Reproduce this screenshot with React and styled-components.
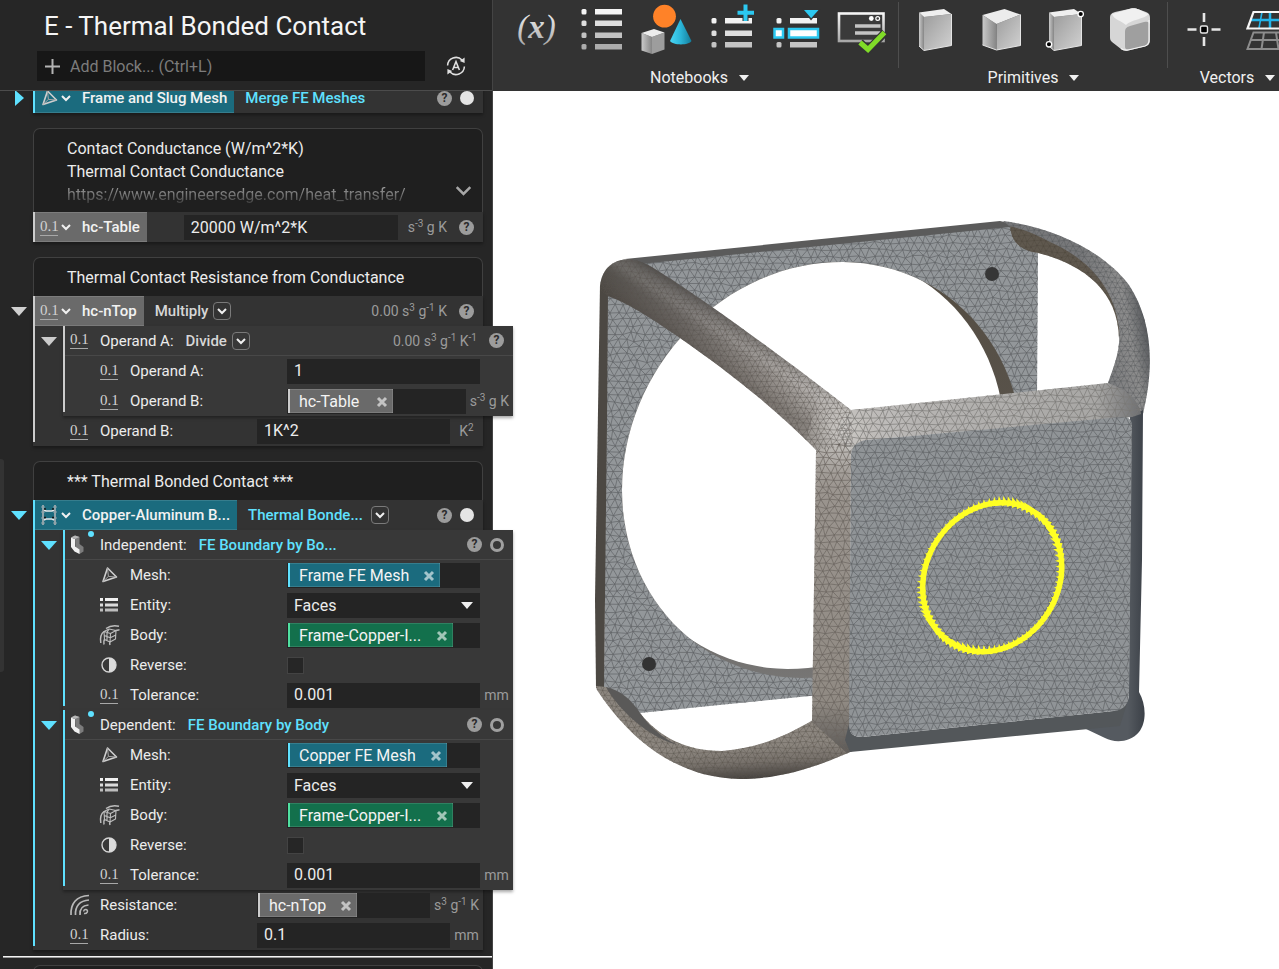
import React, { useId } from "react";
import styled, { createGlobalStyle, css } from "styled-components";

const GlobalStyle = createGlobalStyle`
  *, *::before, *::after { box-sizing: border-box; }
  body {
    margin: 0;
    background: #fff;
    color: #ececec;
    font-family: Roboto, "Liberation Sans", sans-serif;
    font-size: 15px;
    line-height: 20px;
  }
  button, input, select { font: inherit; color: inherit; margin: 0; }
  button { background: none; border: 0; padding: 0; cursor: pointer; }
  svg { display: block; flex: none; }
`;

const tones = {
  cyan: { bar: "#5fe1ff", fill: "#1b6b7e", text: "#5fe1ff" },
  gray: { bar: "#cccccc", fill: "#6a6a6a", text: "#d6d6d6" },
  green: { bar: "#4fe0a0", fill: "#13704c", text: "#4fe0a0" },
};

/* ---------- page frame ---------- */

const Shell = styled.div`
  display: flex;
  height: 100vh;
  overflow: hidden;
`;

const Sidebar = styled.aside`
  position: relative;
  z-index: 1;
  flex: none;
  width: 493px;
  background: #262626;
  border-right: 1px solid #444;
`;

const SidebarHead = styled.header`
  position: relative;
  z-index: 1;
  height: 91px;
  padding: 10px 24px 0 37px;
  background: #262626;
  border-bottom: 1px solid #4c4c4c;
`;

const Title = styled.h1`
  margin: 0 0 9px 7px;
  font-size: 26px;
  font-weight: 400;
  line-height: 32px;
  color: #f5f5f5;
`;

const SearchRow = styled.div`
  display: flex;
  align-items: center;
  justify-content: space-between;
`;

const SearchBox = styled.label`
  display: flex;
  align-items: center;
  gap: 9px;
  width: 388px;
  height: 30px;
  padding: 1px 7px 0;
  background: #171717;
`;

const SearchInput = styled.input`
  flex: 1;
  min-width: 0;
  padding: 0;
  border: 0;
  outline: 0;
  background: none;
  font-size: 16px;
  &::placeholder { color: #7c7c7c; opacity: 1; }
`;

const AutoButton = styled.button`
  margin-right: 2px;
`;

const Main = styled.main`
  flex: 1;
  min-width: 0;
  display: flex;
  flex-direction: column;
`;

const ToolbarStrip = styled.nav`
  display: flex;
  flex: none;
  height: 91px;
  padding: 2px 0 0 7px;
  overflow: hidden;
  background: #333;
`;

const ToolGroup = styled.section`
  flex: none;
`;

const ToolIcons = styled.div`
  display: flex;
  height: 66px;
  padding: 0 4px;
  border-right: 1px solid #4e4e4e;
`;

const ToolButton = styled.button`
  width: 65px;
  height: 60px;
`;

const ToolLabel = styled.button`
  display: flex;
  align-items: center;
  justify-content: center;
  gap: 11px;
  width: 100%;
  height: 20px;
  font-size: 16px;
  color: #f0f0f0;
`;

const Viewport = styled.div`
  flex: 1;
  min-height: 0;
  background: #fff;
  svg { width: 100%; height: 100%; }
`;

/* ---------- notebook ---------- */

const Notebook = styled.div`
  display: flex;
  flex-direction: column;
  gap: 15px;
  margin-top: -8px;
  padding-right: 9px;
`;

const Gutter = styled.button`
  display: flex;
  align-items: center;
  justify-content: center;
  flex: none;
  width: ${(p) => (p.$nested ? 28 : 33)}px;
  height: 30px;
  padding-left: ${(p) => (p.$nested ? 0 : 5)}px;
`;

const Comment = styled.div`
  position: relative;
  margin-left: 33px;
  padding: 8px 33px 7px;
  height: ${(p) => (p.$tall ? 84 : 39)}px;
  border: 1px solid #404040;
  border-bottom: 0;
  border-radius: 7px 7px 0 0;
  background: #1f1f1f;
  font-size: 16px;
  line-height: 23px;
  overflow: hidden;
`;

const CommentLine = styled.div`
  white-space: nowrap;
  ${(p) =>
    p.$faded &&
    css`
      color: transparent;
      background: linear-gradient(#b4b4b4, #333);
      background-clip: text;
    `}
`;

const CommentMore = styled.button`
  position: absolute;
  right: 10px;
  bottom: 13px;
`;

const BlockRow = styled.div`
  display: flex;
  align-items: flex-start;
`;

const Body = styled.div`
  flex: none;
  width: 450px;
  padding-left: 2px;
  background:
    linear-gradient(${(p) => tones[p.$tone].bar}, ${(p) => tones[p.$tone].bar}) 0 0 / 2px
      ${(p) => (p.$short ? "calc(100% - 4px)" : "100%")} no-repeat,
    ${(p) => (p.$nested ? "#383838" : "#333333")};
  box-shadow: 0 2px 3px rgba(0, 0, 0, 0.35);
`;

const Head = styled.div`
  display: flex;
  align-items: center;
  height: 30px;
  padding-right: 9px;
  ${(p) =>
    p.$nested &&
    css`
      padding-left: 5px;
      border-bottom: 1px solid #484848;
    `}
`;

const NameTag = styled.button`
  display: flex;
  align-items: center;
  height: 30px;
  margin-right: 11px;
  padding: 0 7px 0 5px;
  background: ${(p) => tones[p.$tone].fill};
  box-shadow: inset 0 1px rgba(255, 255, 255, 0.12), inset 0 -1px rgba(255, 255, 255, 0.12);
  font-weight: 500;
  color: #f2f2f2;
  white-space: nowrap;
`;

const NameText = styled.span`
  margin-left: 11px;
`;

const ChevronSlot = styled.span`
  margin-left: 3px;
`;

const Func = styled.span`
  min-width: ${(p) => p.$min || 0}px;
  font-weight: 500;
  color: ${(p) => tones[p.$tone].text};
  white-space: nowrap;
`;

const HeadLabel = styled.span`
  margin: 0 12px;
`;

const DropButton = styled.button`
  display: grid;
  place-items: center;
  width: 18px;
  height: 18px;
  margin-left: 5px;
  border: 1px solid #7a7a7a;
  border-radius: 4px;
`;

const HeadEnd = styled.div`
  display: flex;
  align-items: center;
  gap: 8px;
  margin-left: auto;
`;

const Help = styled.button`
  display: grid;
  place-items: center;
  width: 15px;
  height: 15px;
  border-radius: 50%;
  background: #9c9c9c;
  color: #2c2c2c;
  font-size: 12px;
  font-weight: 700;
  line-height: 15px;
`;

const Dot = styled.button`
  width: 14px;
  height: 14px;
  border-radius: 50%;
  ${(p) => (p.$hollow ? "border: 3px solid #a0a0a0;" : "background: #e4e4e4;")}
`;

const Param = styled.div`
  display: flex;
  align-items: center;
  height: 30px;
  padding-left: 35px;
`;

const ParamLabel = styled.label`
  width: 169px;
  padding-left: 12px;
`;

const Field = styled.div`
  display: flex;
  align-items: center;
  flex: 1;
  min-width: 0;
  height: 25px;
  padding-left: ${(p) => (p.$chip ? 1 : 7)}px;
  background: #242424;
  font-size: 16px;
`;

const TextInput = styled.input`
  width: 100%;
  min-width: 0;
  padding: 0;
  border: 0;
  outline: 0;
  background: none;
`;

const Select = styled.select`
  flex: 1;
  min-width: 0;
  padding: 1px 0 0;
  border: 0;
  outline: 0;
  background: none;
  appearance: none;
`;

const SelectArrow = styled.span`
  margin-right: 7px;
  pointer-events: none;
`;

const CheckCell = styled.div`
  display: flex;
  align-items: center;
  flex: 1;
`;

const Check = styled.input`
  appearance: none;
  width: 17px;
  height: 17px;
  margin: 0;
  border: 1px solid #434343;
  background: #262626;
`;

const Chip = styled.span`
  display: flex;
  align-items: center;
  justify-content: space-between;
  width: ${(p) => p.$width}px;
  height: 24px;
  padding: 1px 5px 0 9px;
  border-left: 2px solid ${(p) => tones[p.$tone].bar};
  background: ${(p) => tones[p.$tone].fill};
  box-shadow: inset -1px 0 rgba(255, 255, 255, 0.12), inset 0 1px rgba(255, 255, 255, 0.12),
    inset 0 -1px rgba(255, 255, 255, 0.12);
  color: #f4f4f4;
  white-space: nowrap;
`;

const UnitText = styled.span`
  font-size: 14px;
  color: #9b9b9b;
  white-space: nowrap;
  text-align: center;
  ${(p) => p.$cell && "min-width: 33px; padding: 0 4px;"}
  ${(p) => p.$head && "margin-right: 4px;"}
  sup {
    font-size: 10px;
    line-height: 0;
    vertical-align: 5px;
  }
`;

const TableField = styled(Field)`
  flex: none;
  width: 214px;
  margin-left: 26px;
  padding-top: 1px;
`;

const Scalar = styled.span`
  width: 18px;
  height: 17px;
  border-bottom: 1px solid #a8a8a8;
  font-family: "Liberation Serif", serif;
  font-size: 15px;
  font-weight: 400;
  line-height: 15px;
  text-align: center;
  color: #d2d2d2;
`;

const BoundaryMark = styled.span`
  position: relative;
  &::after {
    content: "";
    position: absolute;
    top: -4px;
    left: 18px;
    width: 6px;
    height: 6px;
    border-radius: 50%;
    background: #5fe1ff;
  }
`;

const IconCell = styled.span`
  display: flex;
  align-items: center;
  width: 18px;
  svg { overflow: visible; }
`;

const InsertLine = styled.div`
  height: 2px;
  margin: -9px -9px -8px 3px;
  border-top: 1px solid #f4f4f4;
  border-bottom: 1px solid #9a9a9a;
`;

const SideHandle = styled.div`
  position: absolute;
  left: 0;
  top: 459px;
  width: 4px;
  height: 213px;
  border-radius: 0 3px 3px 0;
  background: #333;
`;

/* ---------- small icons ---------- */

const Chevron = ({ w = 10, sw = 2, color = "#f0f0f0" }) => (
  <svg width={w} height={w} viewBox="0 0 10 10" fill="none" stroke={color} strokeWidth={sw}>
    <path d="M1 3 L5 7 L9 3" />
  </svg>
);

const Triangle = ({ w = 10, color = "#f0f0f0" }) => (
  <svg width={w} height={w / 2 + 1} viewBox="0 0 16 9" preserveAspectRatio="none">
    <path d="M0 0 H16 L8 9 Z" fill={color} />
  </svg>
);

const TriangleRight = ({ color }) => (
  <svg width="9" height="16" viewBox="0 0 9 16">
    <path d="M0 0 V16 L9 8 Z" fill={color} />
  </svg>
);

const Cross = () => (
  <svg width="12" height="12" viewBox="0 0 12 12" stroke="#fff" strokeOpacity="0.6" strokeWidth="3">
    <path d="M2 2 L10 10 M10 2 L2 10" />
  </svg>
);

const PlusIcon = () => (
  <svg width="17" height="17" viewBox="0 0 17 17" stroke="#b4b4b4" strokeWidth="2">
    <path d="M8.500 1 V16 M1 8.500 H16" />
  </svg>
);

const AutoIcon = () => (
  <svg width="20" height="20" viewBox="0 0 20 20" fill="none" stroke="#e0e0e0" strokeWidth="1.500">
    <path d="M1.600 9.500 A8.400 8.400 0 0 1 16 4 M18.400 10.500 A8.400 8.400 0 0 1 4 16" />
    <path d="M18.600 1.500 V7 L13.800 5 Z M1.400 18.500 V13 L6.200 15 Z" fill="#e0e0e0" stroke="none" />
    <path d="M6.600 14 L10 5.600 L13.400 14 M7.800 11.400 H12.200" />
  </svg>
);

const MeshIcon = () => (
  <svg width="18" height="18" viewBox="0 0 18 18" fill="none" strokeLinejoin="round">
    <path d="M7.500 2 L16.500 11 L3 15.500 Z" stroke="#cfcfcf" strokeWidth="1.600" />
    <path d="M7.500 2 L8.400 10.400 L3 15.500 M8.400 10.400 L16 11" stroke="#a8a8a8" strokeWidth="1" />
  </svg>
);

const ListIcon = () => (
  <svg width="18" height="18" viewBox="0 0 18 18">
    <path d="M0 2 H3 V5 H0 Z M5 2 H18 V5 H5 Z" fill="#f0f0f0" />
    <path d="M0 7.500 H3 V10.500 H0 Z M5 7.500 H18 V10.500 H5 Z" fill="#dcdcdc" />
    <path d="M0 12.500 H3 V15.500 H0 Z M5 12.500 H18 V15.500 H5 Z" fill="#bdbdbd" />
  </svg>
);

const BodyIcon = () => (
  <svg width="20" height="20" viewBox="0 0 20 20" fill="none" stroke="#bdbdbd" strokeWidth="1.100" strokeLinejoin="round">
    <path d="M4 6.500 L9 4 L16 5.500 L15.500 14 L10 17 L4.500 14.500 Z M4 6.500 L10.500 8.500 L16 5.500 M10.500 8.500 L10 17 M4.200 10.500 L10.300 12.800 L15.800 10 M9 4 L7 7.500 L7 15.500" />
    <path d="M6 3.500 C10 .5 15 .3 19 1.200 M.8 18 C0 13 .5 9 4 6.500 M16 5.500 C17.500 4.700 18 4.700 19.500 5 M4.500 14.500 C3.500 16 3.500 17 4 19.500 M10 17 C9.500 18 9.500 18.500 10 20" strokeWidth="1.500" />
  </svg>
);

const HalfIcon = () => (
  <svg width="18" height="18" viewBox="0 0 18 18">
    <circle cx="9" cy="9" r="7" fill="none" stroke="#d4d4d4" strokeWidth="1.400" />
    <path d="M9 2 A7 7 0 0 1 9 16 Z" fill="#dcdcdc" />
  </svg>
);

const BoundaryIcon = () => (
  <svg width="18" height="20" viewBox="0 0 18 20">
    <path d="M1 2.500 L5 .5 L9.500 2 V9 L13.500 12 V16.500 L9.500 19 L5.500 15 L5 3 Z" fill="#7c7c7c" />
    <path d="M1 2.500 L5 4 V11.500 L9.500 14.500 V19 L4.500 16.500 L1 12 Z" fill="#f2f2f2" />
    <path d="M1 2.500 L5 .5 L9.500 2 L5 4 Z" fill="#b8b8b8" />
  </svg>
);

const BondIcon = () => (
  <svg width="18" height="20" viewBox="0 0 18 20" fill="none">
    <path d="M3 0 V20 M15 0 V20" stroke="#8fa3a9" strokeWidth="2" />
    <path d="M1 2 H5 M1 7 H5 M1 13 H5 M1 18 H5 M13 2 H17 M13 7 H17 M13 13 H17 M13 18 H17" stroke="#8fa3a9" strokeWidth="1" />
    <path d="M4 5 L6 6 H12 L14 5 M4 15 L6 14 H12 L14 15" stroke="#e4e8e9" strokeWidth="1.500" />
    <path d="M4 4 H6 M12 4 H14 M4 12.500 H6 M12 12.500 H14" stroke="#141414" strokeWidth="1.600" />
  </svg>
);

const ResistIcon = () => (
  <svg width="20" height="22" viewBox="0 0 20 22" fill="none" stroke="#b9b9b9" strokeWidth="1.700">
    <path d="M1 21 C.5 10 6 2 19 1.500" />
    <path d="M5.500 21 C5 12.500 9.500 6.500 19 6" />
    <path d="M10 21 C9.500 15 12.500 11.500 18.500 11" />
    <path d="M14 19.500 C17 20 19 16.500 16 15.500 C14.500 15.300 13.500 16.500 14 17.500" strokeWidth="1.500" />
  </svg>
);

const ScalarIcon = () => <Scalar>0.1</Scalar>;

/* ---------- toolbar icons ---------- */

const Tool = ({ label, children }) => (
  <ToolButton aria-label={label}>
    <svg width="65" height="60" viewBox="0 2 65 60">
      <defs>
        <linearGradient id="steel" x1="0" y1="0" x2="1" y2="1">
          <stop offset="0" stopColor="#9c9c9c" />
          <stop offset="1" stopColor="#d2d2d2" />
        </linearGradient>
        <linearGradient id="steelDark" x1="0" y1="0" x2="1" y2="0">
          <stop offset="0" stopColor="#c9c9c9" />
          <stop offset="1" stopColor="#858585" />
        </linearGradient>
        <linearGradient id="fadeDown" x1="0" y1="0" x2="0" y2="1">
          <stop offset="0" stopColor="#f5f5f5" />
          <stop offset="1" stopColor="#a8a8a8" />
        </linearGradient>
        <linearGradient id="coneFill" x1="0" y1="0" x2="1" y2="0">
          <stop offset="0" stopColor="#49d6f5" />
          <stop offset=".5" stopColor="#2bb5d8" />
          <stop offset="1" stopColor="#137b99" />
        </linearGradient>
      </defs>
      {children}
    </svg>
  </ToolButton>
);

const ListBars = ({ rows }) =>
  rows.map(([y, c]) => (
    <g key={y} fill={c}>
      <rect x="12.500" y={y} width="5" height="5.500" rx="1.500" />
      <rect x="26" y={y} width="27" height="5.500" />
    </g>
  ));

const threeRows = [[18, "#f2f2f2"], [30.5, "#dedede"], [42, "#c4c4c4"]];

const SlabShape = () => (
  <g strokeLinejoin="round">
    <path d="M16 12.500 L21 17 V50.500 L16 46 Z" fill="url(#steelDark)" />
    <path d="M21 17 L48.500 14 V45.500 L21 50.500 Z" fill="url(#steel)" />
    <path d="M16 12.500 L41 9 L48.500 14 L21 17 Z" fill="#efefef" />
    <path d="M16 46 L21 50.500 L48.500 45.500 V14" fill="none" stroke="#e4e4e4" strokeWidth="1" />
  </g>
);

const notebookTools = [
  ["Variable", <text key="v" x="32.500" y="38" textAnchor="middle" fontFamily="Liberation Serif, serif" fontStyle="italic" fontWeight="400" fontSize="33" fill="url(#fadeDown)">(<tspan fontWeight="700">x</tspan>)</text>],
  ["List", <ListBars key="l" rows={[[9, "#f5f5f5"], [20.5, "#dedede"], [32.5, "#c2c2c2"], [44, "#acacac"]]} />],
  ["Objects", <g key="o">
    <circle cx="30.500" cy="16.200" r="11.400" fill="#ff8228" />
    <path d="M7.500 33 L18 37 V54 L7.500 50.500 Z" fill="url(#steelDark)" />
    <path d="M18 37 L30.500 32.500 V49.500 L18 54 Z" fill="#9d9d9d" />
    <path d="M7.500 33 L20 29 L30.500 32.500 L18 37 Z" fill="#ececec" />
    <path d="M46.500 19 L57.500 41 C55 45.500 39 45.500 36 41 Z" fill="url(#coneFill)" />
  </g>],
  ["Add to list", <g key="a">
    <ListBars rows={threeRows} />
    <path d="M46.500 4.500 V21 M38.500 12.700 H55" stroke="#333" strokeWidth="6" />
    <path d="M46.500 4.500 V21 M38.500 12.700 H55" stroke="#2cc8f0" strokeWidth="4" />
  </g>],
  ["Select in list", <g key="s">
    <ListBars rows={threeRows} />
    <path d="M38 9 H56.500 L47 20.500 Z" fill="#333" />
    <path d="M40 10 H54.500 L47.200 18.300 Z" fill="#2cc8f0" />
    <rect x="10.500" y="29" width="8.500" height="8.500" fill="#fff" stroke="#2cc8f0" strokeWidth="2.500" />
    <rect x="25" y="29" width="29" height="8.500" fill="#fff" stroke="#2cc8f0" strokeWidth="2.500" />
  </g>],
  ["Report", <g key="r">
    <rect x="10" y="13.500" width="44.500" height="27.500" fill="#3a3a3a" stroke="url(#fadeDown)" strokeWidth="2.600" />
    <circle cx="42.300" cy="18.500" r="2.400" fill="#fff" />
    <circle cx="48.700" cy="18.500" r="1.900" fill="none" stroke="#fff" strokeWidth="1.200" />
    <path d="M26 26 H51.500 M26 33 H51.500" stroke="#c4c4c4" strokeWidth="3.500" />
    <path d="M31 42.500 L39 50 L56 32.500" stroke="#333" strokeWidth="8" fill="none" />
    <path d="M31 42.500 L39 49.500 L55.500 32.500" stroke="#80dc28" strokeWidth="5" fill="none" />
  </g>],
];

const primitiveTools = [
  ["Box", <SlabShape key="b" />],
  ["Cube", <g key="c">
    <path d="M14.500 15 L28.500 24 V50 L14.500 45 Z" fill="url(#steelDark)" />
    <path d="M28.500 24 L52.500 14.500 V45.500 L28.500 50 Z" fill="url(#steel)" />
    <path d="M14.500 15 L36.500 9 L52.500 14.500 L28.500 24 Z" fill="#ececec" />
    <path d="M14.500 45 L28.500 50 L52.500 45.500 V14.500" fill="none" stroke="#e4e4e4" strokeWidth="1" />
  </g>],
  ["Box from corners", <g key="p">
    <SlabShape />
    <circle cx="47.700" cy="14" r="2.700" fill="#000" stroke="#fff" strokeWidth="1.300" />
    <circle cx="16" cy="44.300" r="2.700" fill="#000" stroke="#fff" strokeWidth="1.300" />
  </g>],
  ["Rounded box", <g key="r">
    <path d="M12 18 C12 14 14 13 17 12 L33 8.500 C36 8 38 8.500 41 9.500 L48 12 C51 13 52 15 52 18 V40 C52 44 50 45.500 47 46.500 L30 50.500 C27 51 25 50.500 23 49 L14 42 C12 40 12 39 12 36 Z" fill="#d6d6d6" />
    <path d="M27 32 C27 28 29 27 32 26 L46 22 C50 21 51.500 22 51.500 25 V40 C51.500 43 50 45 47 46 L32 49.500 C28 50 27 49 27 46 Z" fill="#9f9f9f" />
    <path d="M14 14 L33 8.500 C36 8 38 8.500 41 9.500 L50 14 C48 19 34 19 28 25 C24 21 16 20 14 14 Z" fill="#f0f0f0" />
    <path d="M51 20 V40 C51 43 50 45 47 46 L30 50 C27 50.500 25 50 23 48.500" fill="none" stroke="#f4f4f4" strokeWidth="1.200" />
  </g>],
];

const vectorTools = [
  ["Point", <g key="pt" stroke="#e6e6e6">
    <path d="M32 13 V22 M32 37 V46 M15.500 29.500 H24.500 M39.500 29.500 H48.500" strokeWidth="2.600" />
    <rect x="28.500" y="26" width="7" height="7" rx="1.500" fill="#000" strokeWidth="1.400" />
  </g>],
  ["Plane", <g key="pl" fill="none">
    <path d="M16.500 32.500 H49.500 L55.500 49 H10.500 Z M13.500 40 H53 M27 32.500 L24.500 49 M39 32.500 L41.500 49" stroke="#8c8c8c" strokeWidth="2" />
    <path d="M13.500 20 H53 M33 12 V28" stroke="#22b4ea" strokeWidth="2.500" />
    <path d="M25 12 L22 28" stroke="#22b4ea" strokeWidth="1.500" />
    <path d="M16.500 12 H49.500 L55.500 28.500 H10.500 Z" stroke="#f6f6f6" strokeWidth="2.200" />
  </g>],
];

function ToolSection({ title, tools }) {
  return (
    <ToolGroup>
      <ToolIcons>
        {tools.map(([label, art]) => (
          <Tool key={label} label={label}>{art}</Tool>
        ))}
      </ToolIcons>
      <ToolLabel>
        {title}
        <Triangle />
      </ToolLabel>
    </ToolGroup>
  );
}

/* ---------- notebook parts ---------- */

function Units({ value, parts, cell, head }) {
  return (
    <UnitText $cell={cell} $head={head}>
      {value && `${value} `}
      {parts.map(([base, power], i) => (
        <React.Fragment key={base}>
          {i > 0 && " "}
          {base}
          {power && <sup>{power}</sup>}
        </React.Fragment>
      ))}
    </UnitText>
  );
}

function Tag({ tone, icon, children }) {
  return (
    <NameTag $tone={tone}>
      {icon}
      <ChevronSlot><Chevron /></ChevronSlot>
      <NameText>{children}</NameText>
    </NameTag>
  );
}

const Drop = () => (
  <DropButton aria-label="Change overload"><Chevron /></DropButton>
);

function ParamRow({ icon, label, text, chip, select, check, units }) {
  const id = useId();
  return (
    <Param>
      <IconCell>{icon}</IconCell>
      <ParamLabel htmlFor={chip ? undefined : id} as={chip ? "span" : "label"}>{label}:</ParamLabel>
      {check ? (
        <CheckCell><Check id={id} type="checkbox" /></CheckCell>
      ) : (
        <Field $chip={!!chip}>
          {text && <TextInput id={id} defaultValue={text} />}
          {select && (
            <>
              <Select id={id} defaultValue={select}>
                <option>{select}</option>
              </Select>
              <SelectArrow><Triangle w={12} /></SelectArrow>
            </>
          )}
          {chip && (
            <Chip $tone={chip.tone} $width={chip.width}>
              {chip.name}
              <button aria-label={`Remove ${chip.name}`}><Cross /></button>
            </Chip>
          )}
        </Field>
      )}
      {units ? <Units cell parts={units} /> : <UnitText $cell />}
    </Param>
  );
}

function Nested({ tone, head, children }) {
  return (
    <BlockRow>
      <Gutter $nested aria-label="Collapse"><Triangle w={16} color={tones[tone].bar} /></Gutter>
      <Body $nested $tone={tone} $short>
        <Head $nested>{head}</Head>
        {children}
      </Body>
    </BlockRow>
  );
}

function BoundaryBlock({ label, func, meshName, meshWidth }) {
  return (
    <Nested
      tone="cyan"
      head={
        <>
          <BoundaryMark><BoundaryIcon /></BoundaryMark>
          <HeadLabel>{label}:</HeadLabel>
          <Func $tone="cyan">{func}</Func>
          <HeadEnd>
            <Help aria-label="Help">?</Help>
            <Dot $hollow aria-label="Toggle visibility" />
          </HeadEnd>
        </>
      }
    >
      <ParamRow icon={<MeshIcon />} label="Mesh" chip={{ tone: "cyan", name: meshName, width: meshWidth }} />
      <ParamRow icon={<ListIcon />} label="Entity" select="Faces" />
      <ParamRow icon={<BodyIcon />} label="Body" chip={{ tone: "green", name: "Frame-Copper-I...", width: 165 }} />
      <ParamRow icon={<HalfIcon />} label="Reverse" check />
      <ParamRow icon={<ScalarIcon />} label="Tolerance" text="0.001" units={[["mm"]]} />
    </Nested>
  );
}

/* ---------- 3D model ---------- */

function meshPath(x0, y0, w, h, step, seed) {
  let s = seed;
  const rand = () => {
    s = (s * 16807) % 2147483647;
    return s / 2147483647 - 0.5;
  };
  const rowH = step * 0.87;
  const cols = Math.ceil(w / step) + 2;
  const rows = Math.ceil(h / rowH) + 2;
  const pts = [];
  for (let r = 0; r < rows; r++) {
    const line = [];
    for (let c = 0; c < cols; c++) {
      line.push([
        (x0 + (c + (r % 2) / 2 - 0.5) * step + rand() * step * 0.38).toFixed(1),
        (y0 + r * rowH + rand() * step * 0.38).toFixed(1),
      ]);
    }
    pts.push(line);
  }
  let d = "";
  for (let r = 0; r < rows; r++) {
    d += "M" + pts[r].map((p) => p.join(" ")).join("L");
    if (r + 1 < rows) {
      for (let c = 0; c + 1 < cols; c++) {
        const a = pts[r][c];
        const b = r % 2 ? pts[r + 1][c + 1] : pts[r + 1][c];
        const e = pts[r + 1][c];
        d += `M${b.join(" ")}L${a.join(" ")}`;
        if (r % 2) d += `L${e.join(" ")}`;
        else d += `M${pts[r][c + 1].join(" ")}L${b.join(" ")}`;
      }
    }
  }
  return d;
}

function ringPoint(cx, cy, a, b, phi, t) {
  return [cx + a * Math.cos(t), cy + b * Math.sin(t + phi)];
}

function ellipsePath(cx, cy, a, b, phi) {
  const n = 120;
  let d = "M";
  for (let i = 0; i < n; i++) {
    const [x, y] = ringPoint(cx, cy, a, b, phi, (i / n) * Math.PI * 2);
    d += `${i ? "L" : ""}${x.toFixed(1)} ${y.toFixed(1)}`;
  }
  return d + "Z";
}

// Cones standing on the ring: upright at top and bottom, leaning left at the sides.
function teethPath() {
  const n = 86;
  const half = 3;
  const f = (v) => v.toFixed(1);
  let d = "";
  for (let i = 0; i < n; i++) {
    const t = (i / n) * Math.PI * 2;
    const [x, y] = ringPoint(992, 577, 69.5, 74.5, -0.14, t);
    const c = Math.cos(t);
    const s = Math.sin(t);
    const ux = -Math.abs(c);
    const uy = -Math.abs(s);
    const len = 6 - 4 * c * s;
    const wide = half - 2.4 * Math.min(0, c * s);
    const bx = x - ux * 3;
    const by = y - uy * 3;
    d += `M${f(bx - uy * wide)} ${f(by + ux * wide)}L${f(x + ux * len)} ${f(y + uy * len)}L${f(bx + uy * wide)} ${f(by - ux * wide)}Z`;
  }
  return d;
}

const coarse = meshPath(590, 215, 560, 570, 8, 17);
const fine = meshPath(590, 215, 565, 570, 6, 91);
const shape = {
  plate: "M607 296 L640 262 L1010 225 L1018 245 L1038 253 L1037 395 L860 420 L830 450 L830 694 L640 713 L604 688 Z",
  topEdge: "M625 259 L1000 221 L1013 224 L1010 227 L640 264 Z",
  leftEdge: "M600 285 L608 292 L607 420 L604 688 L596 688 L595 600 Z",
  tube: "M600 290 C600 270 612 259 630 259 C637 260 642 262 650 266 C694 292 790 362 851 410 L853 446 L816 450 C770 402 700 350 650 318 C636 309 622 301 608 296 Z",
  corner: "M806 438 L822 388 L851 410 L890 406 L880 438 C858 441 851 448 851 480 L816 480 L816 450 Z",
  topStrip: "M851 410 L1108 383 C1125 389 1138 398 1141 414 L1132 417 L868 440 C856 442 851 448 851 457 L838 430 Z",
  leftStrip: "M816 450 L851 440 L850 738 L857 749 L847 753 L812 722 Z",
  face: "M851 457 C851 447 857 441 867 440 L1122 417 C1130 417 1132 420 1132 427 L1129 692 C1129 704 1124 710 1114 711 L862 737 C853 737 849 733 849 724 Z",
  rightEdge: "M1130 417 L1143 410 L1142 560 L1139 692 C1146 704 1147 722 1139 732 C1130 743 1114 743 1105 738 L1086 729 L1110 712 C1124 710 1129 704 1129 692 Z",
  bottomEdge: "M849 724 C849 733 853 737 862 737 L1114 711 L1128 700 L1120 726 L850 752 L845 740 Z",
  armInner: "M1010 225 C1011 240 1018 250 1038 253 C1082 264 1118 290 1119 338 L1122 330 C1122 290 1090 245 1040 232 Z",
  armOuter: "M1003 221 C1058 228 1106 254 1129 285 C1150 317 1156 360 1143 414 L1136 425 L1108 383 C1114 366 1121 350 1119 328 C1114 284 1084 257 1050 242 C1036 234 1022 229 1009 226 Z",
  lowArm: "M596 686 L606 687 C618 692 632 702 640 713 C659 737 686 751 722 751 C756 749 786 736 813 720 L850 735 L857 749 C815 768 780 779 740 779 C668 778 622 728 597 690 Z",
  lowArmInner: "M606 687 C620 690 632 700 640 713 C649 726 662 738 678 745 C650 738 620 712 606 687 Z",
};

function Model() {
  const hole = ellipsePath(822, 470, 200, 208, -0.096);
  const back = ellipsePath(808, 461, 197, 208, -0.096);
  const ring = ellipsePath(992, 577, 69.5, 74.5, -0.14);
  const lines = (id, d, stroke, opacity) => (
    <path d={d} clipPath={`url(#c-${id})`} fill="none" stroke={stroke} strokeWidth="0.800" strokeOpacity={opacity} />
  );
  return (
    <svg viewBox="493 91 786 878" role="img" aria-label="Meshed frame with bonded contact ring">
      <defs>
        {["plate", "tube", "topStrip", "leftStrip", "face", "armOuter", "lowArm", "armInner"].map((k) => (
          <clipPath id={`c-${k}`} key={k}><path d={shape[k]} /></clipPath>
        ))}
        <clipPath id="c-hole"><path d={hole} /></clipPath>
        <clipPath id="c-front">
          <path d={shape.tube} />
          <path d={shape.leftStrip} />
          <path d={shape.topStrip} />
        </clipPath>
        <radialGradient id="g-corner" gradientUnits="userSpaceOnUse" cx="843" cy="430" r="48">
          <stop offset="0" stopColor="#cfccc9" />
          <stop offset=".4" stopColor="#c2bfbb" stopOpacity=".7" />
          <stop offset="1" stopColor="#b5b1ad" stopOpacity="0" />
        </radialGradient>
        <linearGradient id="g-tube" gradientUnits="userSpaceOnUse" x1="605" y1="275" x2="850" y2="435">
          <stop offset="0" stopColor="#55524e" />
          <stop offset=".3" stopColor="#6c6865" />
          <stop offset=".7" stopColor="#9c9793" />
          <stop offset="1" stopColor="#c0bdba" />
        </linearGradient>
        <linearGradient id="g-tubeShade" gradientUnits="userSpaceOnUse" x1="752" y1="334" x2="727" y2="372">
          <stop offset="0" stopColor="#333" stopOpacity=".25" />
          <stop offset=".35" stopColor="#fff" stopOpacity=".12" />
          <stop offset=".6" stopColor="#4a423a" stopOpacity=".08" />
          <stop offset="1" stopColor="#3a332c" stopOpacity=".35" />
        </linearGradient>
        <linearGradient id="g-top" gradientUnits="userSpaceOnUse" x1="845" y1="0" x2="1140" y2="0">
          <stop offset="0" stopColor="#c6c4c2" />
          <stop offset=".25" stopColor="#b6b4b2" />
          <stop offset=".85" stopColor="#a8a7a5" />
          <stop offset="1" stopColor="#6f7072" />
        </linearGradient>
        <linearGradient id="g-left" gradientUnits="userSpaceOnUse" x1="0" y1="430" x2="0" y2="750">
          <stop offset="0" stopColor="#b0aca8" />
          <stop offset=".2" stopColor="#9a948e" />
          <stop offset=".85" stopColor="#908a83" />
          <stop offset="1" stopColor="#5f5c59" />
        </linearGradient>
        <linearGradient id="g-arm" gradientUnits="userSpaceOnUse" x1="1095" y1="330" x2="1150" y2="320">
          <stop offset="0" stopColor="#77787a" />
          <stop offset=".6" stopColor="#8c8c8c" />
          <stop offset="1" stopColor="#4b4e52" />
        </linearGradient>
        <linearGradient id="g-low" gradientUnits="userSpaceOnUse" x1="720" y1="748" x2="722" y2="780">
          <stop offset="0" stopColor="#8c867f" />
          <stop offset=".5" stopColor="#77716b" />
          <stop offset="1" stopColor="#474340" />
        </linearGradient>
        <linearGradient id="g-right" gradientUnits="userSpaceOnUse" x1="1128" y1="0" x2="1146" y2="0">
          <stop offset="0" stopColor="#555a60" />
          <stop offset="1" stopColor="#393e45" />
        </linearGradient>
        <linearGradient id="g-wall" gradientUnits="userSpaceOnUse" x1="0" y1="300" x2="0" y2="680">
          <stop offset="0" stopColor="#554e44" />
          <stop offset=".6" stopColor="#5c5751" />
          <stop offset="1" stopColor="#777675" />
        </linearGradient>
      </defs>

      <path d={shape.plate} fill="#93979a" />
      {lines("plate", coarse, "#5f6265", 0.85)}
      <path d={hole} fill="url(#g-wall)" />
      <path d={back} fill="#fff" clipPath="url(#c-hole)" />
      <path d={shape.topEdge} fill="#5b5b5b" />
      <path d={shape.leftEdge} fill="#4c4843" />
      <circle cx="992" cy="274" r="7" fill="#363636" />
      <circle cx="649" cy="664" r="7" fill="#333" />

      <path d={shape.lowArm} fill="url(#g-low)" />
      {lines("lowArm", fine, "#5a544e", 0.5)}
      <path d={shape.lowArmInner} fill="#5a5958" />

      <path d={shape.armInner} fill="#5f584e" />
      {lines("armInner", fine, "#4a443c", 0.4)}
      <path d={shape.armOuter} fill="url(#g-arm)" />
      {lines("armOuter", fine, "#55585b", 0.5)}

      <path d={shape.rightEdge} fill="url(#g-right)" />
      <path d={shape.tube} fill="url(#g-tube)" />
      <path d={shape.tube} fill="url(#g-tubeShade)" />
      <path d={shape.leftStrip} fill="url(#g-left)" />
      <path d={shape.topStrip} fill="url(#g-top)" />
      <path d={shape.corner} fill="url(#g-corner)" clipPath="url(#c-front)" />
      {lines("leftStrip", coarse, "#6b655f", 0.85)}
      {lines("tube", fine, "#5a5650", 0.5)}
      {lines("topStrip", coarse, "#7b7977", 0.85)}
      <path d={shape.bottomEdge} fill="#53575a" />
      <path d={shape.face} fill="#909497" />
      {lines("face", coarse, "#606366", 0.85)}

      <path d={ring} fill="none" stroke="#ffff24" strokeWidth="5" />
      <path d={teethPath()} fill="#ffff24" />
    </svg>
  );
}

/* ---------- app ---------- */

export default function App() {
  return (
    <Shell>
      <GlobalStyle />
      <Sidebar>
        <SidebarHead>
          <Title>E - Thermal Bonded Contact</Title>
          <SearchRow>
            <SearchBox>
              <PlusIcon />
              <SearchInput aria-label="Add block" placeholder="Add Block... (Ctrl+L)" />
            </SearchBox>
            <AutoButton aria-label="Automatic rebuild"><AutoIcon /></AutoButton>
          </SearchRow>
        </SidebarHead>

        <Notebook>
          <BlockRow>
            <Gutter aria-label="Expand"><TriangleRight color={tones.cyan.bar} /></Gutter>
            <Body $tone="cyan">
              <Head>
                <Tag tone="cyan" icon={<MeshIcon />}>Frame and Slug Mesh</Tag>
                <Func $tone="cyan">Merge FE Meshes</Func>
                <HeadEnd>
                  <Help aria-label="Help">?</Help>
                  <Dot aria-label="Toggle visibility" />
                </HeadEnd>
              </Head>
            </Body>
          </BlockRow>

          <div>
            <Comment $tall>
              <CommentLine>Contact Conductance (W/m^2*K)</CommentLine>
              <CommentLine>Thermal Contact Conductance</CommentLine>
              <CommentLine $faded>https://www.engineersedge.com/heat_transfer/</CommentLine>
              <CommentMore aria-label="Show more"><Chevron w={17} sw={1.5} color="#a6a6a6" /></CommentMore>
            </Comment>
            <BlockRow>
              <Gutter as="span" />
              <Body $tone="gray">
                <Head>
                  <Tag tone="gray" icon={<ScalarIcon />}>hc-Table</Tag>
                  <TableField>
                    <TextInput aria-label="hc-Table value" defaultValue="20000 W/m^2*K" />
                  </TableField>
                  <HeadEnd>
                    <Units head parts={[["s", "-3"], ["g"], ["K"]]} />
                    <Help aria-label="Help">?</Help>
                  </HeadEnd>
                </Head>
              </Body>
            </BlockRow>
          </div>

          <div>
            <Comment>
              <CommentLine>Thermal Contact Resistance from Conductance</CommentLine>
            </Comment>
            <BlockRow>
              <Gutter aria-label="Collapse"><Triangle w={16} color="#d0d0d0" /></Gutter>
              <Body $tone="gray" $short>
                <Head>
                  <Tag tone="gray" icon={<ScalarIcon />}>hc-nTop</Tag>
                  <Func $tone="gray">Multiply</Func>
                  <Drop />
                  <HeadEnd>
                    <Units head value="0.00" parts={[["s", "3"], ["g", "-1"], ["K"]]} />
                    <Help aria-label="Help">?</Help>
                  </HeadEnd>
                </Head>
                <Nested
                  tone="gray"
                  head={
                    <>
                      <ScalarIcon />
                      <HeadLabel>Operand A:</HeadLabel>
                      <Func $tone="gray">Divide</Func>
                      <Drop />
                      <HeadEnd>
                        <Units head value="0.00" parts={[["s", "3"], ["g", "-1"], ["K", "-1"]]} />
                        <Help aria-label="Help">?</Help>
                      </HeadEnd>
                    </>
                  }
                >
                  <ParamRow icon={<ScalarIcon />} label="Operand A" text="1" />
                  <ParamRow
                    icon={<ScalarIcon />}
                    label="Operand B"
                    chip={{ tone: "gray", name: "hc-Table", width: 105 }}
                    units={[["s", "-3"], ["g"], ["K"]]}
                  />
                </Nested>
                <ParamRow icon={<ScalarIcon />} label="Operand B" text="1K^2" units={[["K", "2"]]} />
              </Body>
            </BlockRow>
          </div>

          <div>
            <Comment>
              <CommentLine>*** Thermal Bonded Contact ***</CommentLine>
            </Comment>
            <BlockRow>
              <Gutter aria-label="Collapse"><Triangle w={16} color={tones.cyan.bar} /></Gutter>
              <Body $tone="cyan" $short>
                <Head>
                  <Tag tone="cyan" icon={<BondIcon />}>Copper-Aluminum B...</Tag>
                  <Func $tone="cyan" $min={118}>Thermal Bonde...</Func>
                  <Drop />
                  <HeadEnd>
                    <Help aria-label="Help">?</Help>
                    <Dot aria-label="Toggle visibility" />
                  </HeadEnd>
                </Head>
                <BoundaryBlock label="Independent" func="FE Boundary by Bo..." meshName="Frame FE Mesh" meshWidth={152} />
                <BoundaryBlock label="Dependent" func="FE Boundary by Body" meshName="Copper FE Mesh" meshWidth={159} />
                <ParamRow
                  icon={<ResistIcon />}
                  label="Resistance"
                  chip={{ tone: "gray", name: "hc-nTop", width: 99 }}
                  units={[["s", "3"], ["g", "-1"], ["K"]]}
                />
                <ParamRow icon={<ScalarIcon />} label="Radius" text="0.1" units={[["mm"]]} />
              </Body>
            </BlockRow>
          </div>

          <InsertLine />
          <Comment />
        </Notebook>
        <SideHandle />
      </Sidebar>

      <Main>
        <ToolbarStrip>
          <ToolSection title="Notebooks" tools={notebookTools} />
          <ToolSection title="Primitives" tools={primitiveTools} />
          <ToolSection title="Vectors" tools={vectorTools} />
        </ToolbarStrip>
        <Viewport><Model /></Viewport>
      </Main>
    </Shell>
  );
}
